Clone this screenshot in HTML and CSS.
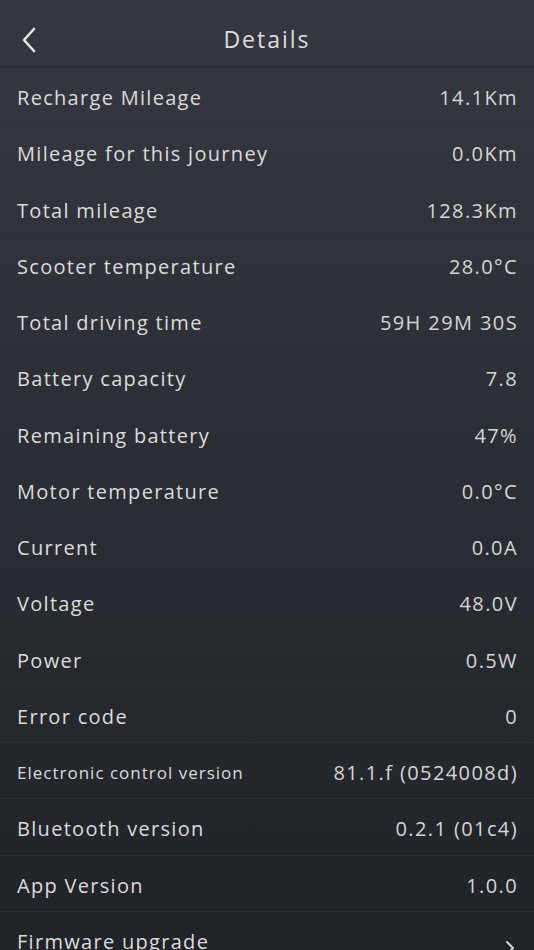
FILE: index.html
```html
<!DOCTYPE html>
<html lang="en">
<head>
    <meta charset="UTF-8">
    <meta name="viewport" content="width=device-width, initial-scale=1.0">
    <title>Details</title>
    <link rel="stylesheet" href="styles.css">
</head>
<body>
    <div class="page">
        <div class="header">
            <button class="back" aria-label="Back">
                <svg width="18" height="26" viewBox="0 0 18 26">
                    <path d="M14 2 L4 13 L14 24" fill="none" stroke="#e6e6e6" stroke-width="2.6" stroke-linecap="round" stroke-linejoin="round"/>
                </svg>
            </button>
            <div class="title">Details</div>
        </div>
        <div class="list">
            <div class="row"><span class="label">Recharge Mileage</span><span class="value">14.1Km</span></div>
            <div class="row"><span class="label">Mileage for this journey</span><span class="value">0.0Km</span></div>
            <div class="row"><span class="label">Total mileage</span><span class="value">128.3Km</span></div>
            <div class="row"><span class="label">Scooter temperature</span><span class="value">28.0°C</span></div>
            <div class="row"><span class="label">Total driving time</span><span class="value">59H 29M 30S</span></div>
            <div class="row"><span class="label">Battery capacity</span><span class="value">7.8</span></div>
            <div class="row"><span class="label">Remaining battery</span><span class="value">47%</span></div>
            <div class="row"><span class="label">Motor temperature</span><span class="value">0.0°C</span></div>
            <div class="row"><span class="label">Current</span><span class="value">0.0A</span></div>
            <div class="row"><span class="label">Voltage</span><span class="value">48.0V</span></div>
            <div class="row"><span class="label">Power</span><span class="value">0.5W</span></div>
            <div class="row"><span class="label">Error code</span><span class="value">0</span></div>
            <div class="row"><span class="label small">Electronic control version</span><span class="value">81.1.f (0524008d)</span></div>
            <div class="row"><span class="label">Bluetooth version</span><span class="value">0.2.1 (01c4)</span></div>
            <div class="row"><span class="label">App Version</span><span class="value">1.0.0</span></div>
            <div class="row link">
                <span class="label">Firmware upgrade</span>
                <svg class="arrow" width="10" height="16" viewBox="0 0 10 16">
                    <path d="M2 2 L8 8 L2 14" fill="none" stroke="#d0d0d0" stroke-width="2" stroke-linecap="round" stroke-linejoin="round"/>
                </svg>
            </div>
        </div>
    </div>
</body>
</html>
```

FILE: styles.css
```css
html, body {
    margin: 0;
    padding: 0;
}
body {
    font-family: 'Open Sans', 'Lato', sans-serif;
    background: linear-gradient(#353840, #202327);
    color: #dcdcdc;
    height: 950px;
    overflow: hidden;
}
.page {
    width: 534px;
}
.header {
    height: 66px;
    border-bottom: 2px solid #2a2c31;
    display: flex;
    align-items: center;
    justify-content: center;
    position: relative;
}
.back {
    position: absolute;
    left: 20px;
    top: 27px;
    padding: 0;
    border: none;
    background: none;
    cursor: pointer;
}
.title {
    font-size: 23px;
    letter-spacing: 2px;
    color: #dedede;
    padding-top: 12px;
}
.row {
    height: 56.25px;
    box-sizing: border-box;
    border-bottom: 1px solid #2c2f34;
    display: flex;
    align-items: center;
    justify-content: space-between;
    padding: 4px 16px 0 17px;
}
.label {
    font-size: 20px;
    letter-spacing: 1.3px;
    color: #dcdcdc;
}
.label.small {
    font-size: 17px;
    letter-spacing: 1px;
}
.value {
    font-size: 20px;
    letter-spacing: 1.4px;
    color: #d6d6d6;
}
.arrow {
    margin-right: 3px;
    margin-top: 14px;
}
```
